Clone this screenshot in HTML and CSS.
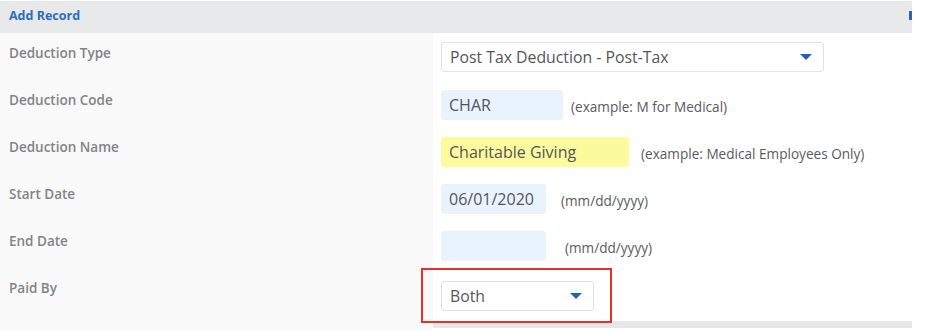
FILE: index.html
```html
<!DOCTYPE html>
<html>
<head>
<meta charset="utf-8">
<link rel="stylesheet" href="styles.css">
</head>
<body>
<div class="panel">
  <div class="header">
    <span class="title">Add Record</span>
    <span class="edge-mark"></span>
  </div>
  <div class="form">
    <div class="label">Deduction Type</div>
    <div class="field">
      <div class="select select-wide"><span>Post Tax Deduction - Post-Tax</span><i class="caret"></i></div>
    </div>

    <div class="label">Deduction Code</div>
    <div class="field">
      <div class="input input-blue input-code">CHAR</div>
      <span class="hint hint-code">(example: M for Medical)</span>
    </div>

    <div class="label">Deduction Name</div>
    <div class="field">
      <div class="input input-yellow input-name">Charitable Giving</div>
      <span class="hint hint-name">(example: Medical Employees Only)</span>
    </div>

    <div class="label">Start Date</div>
    <div class="field">
      <div class="input input-blue input-date">06/01/2020</div>
      <span class="hint hint-start">(mm/dd/yyyy)</span>
    </div>

    <div class="label">End Date</div>
    <div class="field">
      <div class="input input-blue input-date"></div>
      <span class="hint hint-end">(mm/dd/yyyy)</span>
    </div>

    <div class="label">Paid By</div>
    <div class="field">
      <div class="select select-narrow"><span>Both</span><i class="caret"></i></div>
    </div>
  </div>
  <div class="footer"></div>
</div>
<div class="highlight"></div>
</body>
</html>
```

FILE: styles.css
```css
html, body {
  margin: 0;
  padding: 0;
  background: #ffffff;
}

body {
  position: relative;
  width: 927px;
  height: 331px;
  overflow: hidden;
  font-family: "Open Sans", "Liberation Sans", sans-serif;
}

.panel {
  width: 912px;
}

.header {
  height: 32px;
  margin-top: 1px;
  background: #e7e8ea;
  display: flex;
  align-items: center;
  justify-content: space-between;
  padding-left: 9px;
  box-sizing: border-box;
}

.title {
  color: #2c6cbf;
  font-weight: 700;
  font-size: 12.5px;
  line-height: 16px;
  margin-top: -3px;
}

.edge-mark {
  width: 3px;
  height: 9px;
  background: #2a63b8;
  margin-top: -4px;
}

.form {
  display: grid;
  grid-template-columns: 433px 1fr;
  grid-auto-rows: 47px;
}

.label {
  background: #f9f9f9;
  color: #838386;
  font-size: 13.5px;
  font-weight: 600;
  padding: 12px 0 0 9px;
  line-height: 16px;
}

.field {
  background: #ffffff;
  display: flex;
  align-items: center;
  padding-left: 8px;
  padding-top: 3px;
}

.form > .label:nth-last-child(2),
.form > .field:last-child {
  height: 50px;
}

.input {
  height: 30px;
  box-sizing: border-box;
  padding-left: 8px;
  border-radius: 3px;
  font-size: 16px;
  line-height: 30px;
  color: #555558;
}

.input-blue {
  background: #e8f3fe;
}

.input-yellow {
  background: #fbfb9e;
}

.input-code { width: 122px; }
.input-name { width: 188px; }
.input-date { width: 105px; }

.hint {
  font-size: 13.6px;
  color: #5a5a5c;
  padding-top: 3px;
  line-height: 16px;
}

.hint-code { margin-left: 8px; }
.hint-name { margin-left: 12px; }
.hint-start { margin-left: 15px; }
.hint-end { margin-left: 19px; }

.select {
  height: 30px;
  box-sizing: border-box;
  border: 1px solid #e2e2e4;
  border-radius: 3px;
  background: #ffffff;
  display: flex;
  align-items: center;
  justify-content: space-between;
  padding: 0 11px 0 8px;
  font-size: 15.8px;
  color: #555558;
}

.select-wide { width: 383px; }
.select-narrow { width: 153px; }

.caret {
  width: 0;
  height: 0;
  border-left: 6px solid transparent;
  border-right: 6px solid transparent;
  border-top: 6px solid #1f5fbf;
}

.form > .field:nth-child(2) { padding-top: 0; }

.footer {
  height: 13px;
  background: #e6e7e9;
}

.highlight {
  position: absolute;
  left: 421px;
  top: 268px;
  width: 191px;
  height: 55px;
  box-sizing: border-box;
  border: 2px solid #e8302a;
}
```
